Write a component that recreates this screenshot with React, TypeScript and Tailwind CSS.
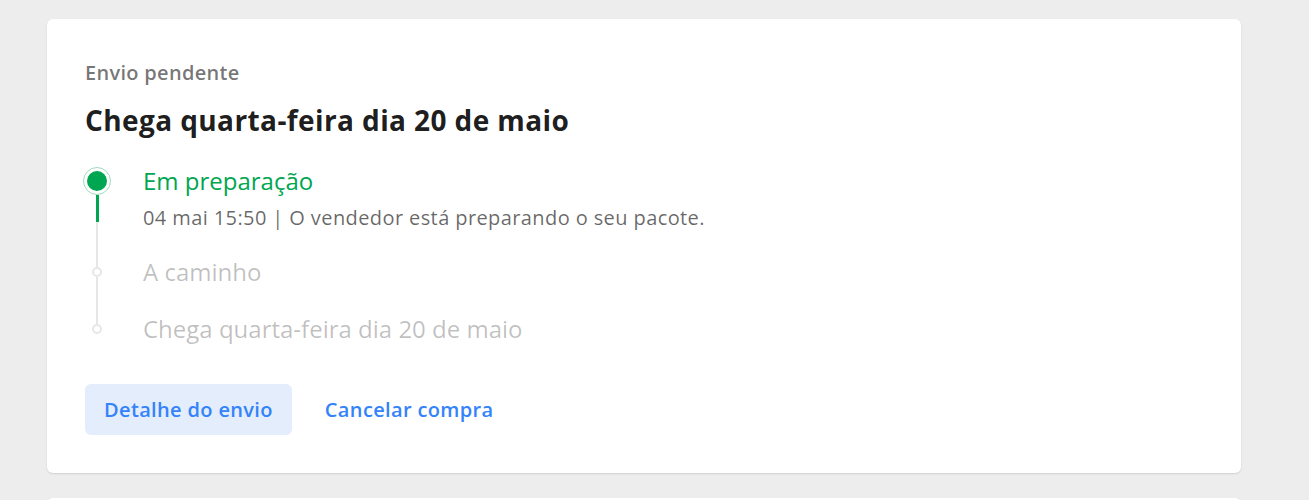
import React from "react";

const font = { fontFamily: '"Open Sans", "Lato", sans-serif' };

const Step = ({ label, last }: { label: string; last?: boolean }) => (
  <div className={`flex gap-[34px] ${last ? "" : "h-[57px]"}`}>
    <div className="flex w-[24px] flex-col items-center">
      <div className="h-[9px] w-[2px] bg-[#e6e6e6]" />
      <div className="h-[10px] w-[10px] rounded-full border-2 border-[#e6e6e6] bg-white" />
      {!last && <div className="w-[2px] flex-1 bg-[#e6e6e6]" />}
    </div>
    <p className="text-[24px] leading-[28px] text-black/25">{label}</p>
  </div>
);

export default function App() {
  return (
    <div className="h-[500px] overflow-hidden bg-[#ededed] pt-[19px] pl-[47px]" style={font}>
      <div className="w-[1194px] rounded-[6px] bg-white pt-[42px] pb-[38px] pl-[38px] shadow-[0_1px_2px_rgba(0,0,0,0.12)]">
        <p className="text-[20px] leading-[24px] font-semibold tracking-[0.3px] text-black/55">Envio pendente</p>
        <h1 className="mt-[19px] text-[28px] leading-[32px] font-bold tracking-[0.4px] text-black/90">
          Chega quarta-feira dia 20 de maio
        </h1>

        <div className="mt-[31px]">
          <div className="flex h-[91px] gap-[34px]">
            <div className="flex w-[24px] flex-col items-center">
              <div className="flex h-[28px] w-[28px] shrink-0 items-center justify-center rounded-full border-[1.5px] border-[#9fdcb9] bg-white">
                <div className="h-[20px] w-[20px] rounded-full bg-[#00a650]" />
              </div>
              <div className="h-[27px] w-[3px] bg-[#00a650]" />
              <div className="w-[2px] flex-1 bg-[#e6e6e6]" />
            </div>
            <div>
              <p className="text-[24px] leading-[28px] text-[#00a650]">Em preparação</p>
              <p className="mt-[11px] text-[20px] leading-[24px] tracking-[0.4px] text-black/60">
                04 mai 15:50 | O vendedor está preparando o seu pacote.
              </p>
            </div>
          </div>
          <Step label="A caminho" />
          <Step label="Chega quarta-feira dia 20 de maio" last />
        </div>

        <div className="mt-[41px] flex items-center gap-[33px]">
          <button className="h-[51px] rounded-[6px] bg-[#e3edfb] px-[19px] text-[20px] font-semibold tracking-[0.35px] text-[#3483fa]">
            Detalhe do envio
          </button>
          <button className="text-[20px] font-semibold tracking-[0.35px] text-[#3483fa]">Cancelar compra</button>
        </div>
      </div>
      <div className="mt-[25px] h-[40px] w-[1194px] rounded-t-[6px] bg-white" />
    </div>
  );
}
